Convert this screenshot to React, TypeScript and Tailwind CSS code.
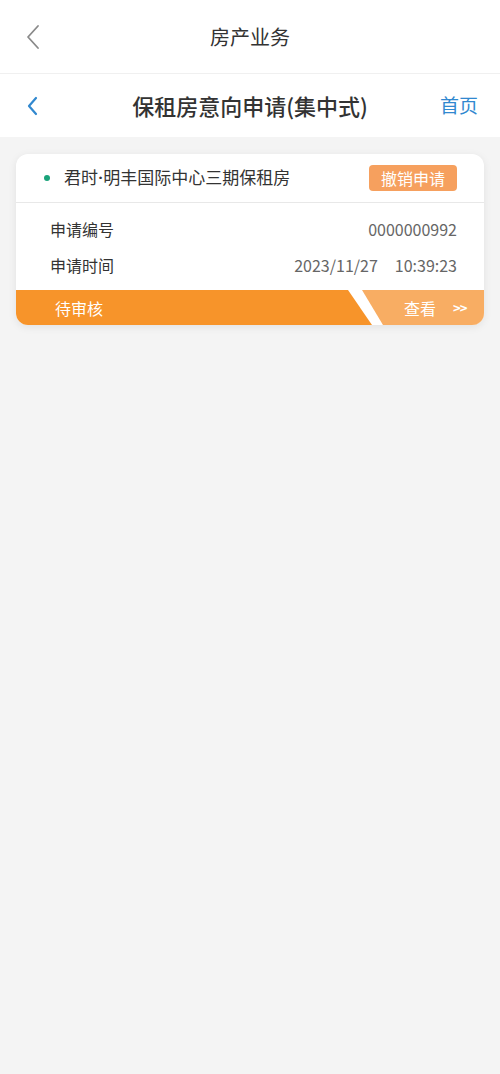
export default function App() {
    return (
        <main
            className="min-h-[1074px] bg-[#f4f4f4] text-[#333]"
            style={{ fontFamily: '"Noto Sans CJK SC", "Noto Sans", Roboto, sans-serif' }}
        >
            {/* system title bar */}
            <div className="h-[74px] bg-white flex items-center border-b border-[#f0f0f0] relative">
                <div className="w-[66px] flex justify-center">
                    <svg width="16" height="26" viewBox="0 0 16 26" fill="none">
                        <path d="M13 2L3 13l10 11" stroke="#8a8a8a" strokeWidth="1.8" strokeLinecap="round" strokeLinejoin="round" />
                    </svg>
                </div>
                <div className="flex-1 text-center text-[20px] pr-[66px]">房产业务</div>
            </div>

            {/* page nav */}
            <div className="h-[63px] bg-white flex items-center">
                <div className="w-[66px] flex justify-center">
                    <svg width="14" height="22" viewBox="0 0 14 22" fill="none">
                        <path d="M10 3l-7 8 7 8" stroke="#3188cf" strokeWidth="2.2" strokeLinecap="round" strokeLinejoin="round" />
                    </svg>
                </div>
                <div className="flex-1 text-center text-[22px] font-medium">保租房意向申请(集中式)</div>
                <div className="w-[66px] text-[19px] text-[#3188cf] pl-[6px]">首页</div>
            </div>

            <div className="px-4 pt-[17px]">
                <div className="bg-white rounded-[12px] shadow-[0_2px_8px_rgba(0,0,0,0.08)] overflow-hidden">
                    <div className="h-[49px] flex items-center pl-[28px] pr-[27px] border-b border-[#e8e8e8]">
                        <span className="w-[6px] h-[6px] rounded-full bg-[#1aa37a]" />
                        <span className="ml-[14px] text-[17px] flex-1">
                            君时<span className="font-['Roboto'] font-bold">·</span>明丰国际中心三期保租房
                        </span>
                        <span className="bg-[#f6a05e] text-white text-[16px] rounded-[4px] px-[12px] h-[26px] flex items-center">
                            撤销申请
                        </span>
                    </div>
                    <div className="pl-[34px] pr-[27px] pt-[8px] pb-[7px] text-[16px]">
                        <div className="flex justify-between h-[36px] items-center">
                            <span>申请编号</span>
                            <span className="text-[#666]">0000000992</span>
                        </div>
                        <div className="flex justify-between h-[36px] items-center">
                            <span>申请时间</span>
                            <span className="text-[#666]">2023/11/27<span className="inline-block w-[17px]" />10:39:23</span>
                        </div>
                    </div>
                    <div className="h-[35px] flex bg-[#f7942a] text-white text-[16px]">
                        <div className="flex-1 flex items-center pl-[39px]">待审核</div>
                        <div className="w-[136px] h-full bg-white [clip-path:polygon(0_0,100%_0,100%_100%,24px_100%)]">
                            <div className="h-full bg-[#f8ad63] [clip-path:polygon(14px_0,100%_0,100%_100%,35px_100%)] flex items-center pl-[56px]">
                                <span>查看</span>
                                <span className="ml-[17px] text-[13px] font-bold tracking-[-1px]">&gt;&gt;</span>
                            </div>
                        </div>
                    </div>
                </div>
            </div>
        </main>
    );
}
